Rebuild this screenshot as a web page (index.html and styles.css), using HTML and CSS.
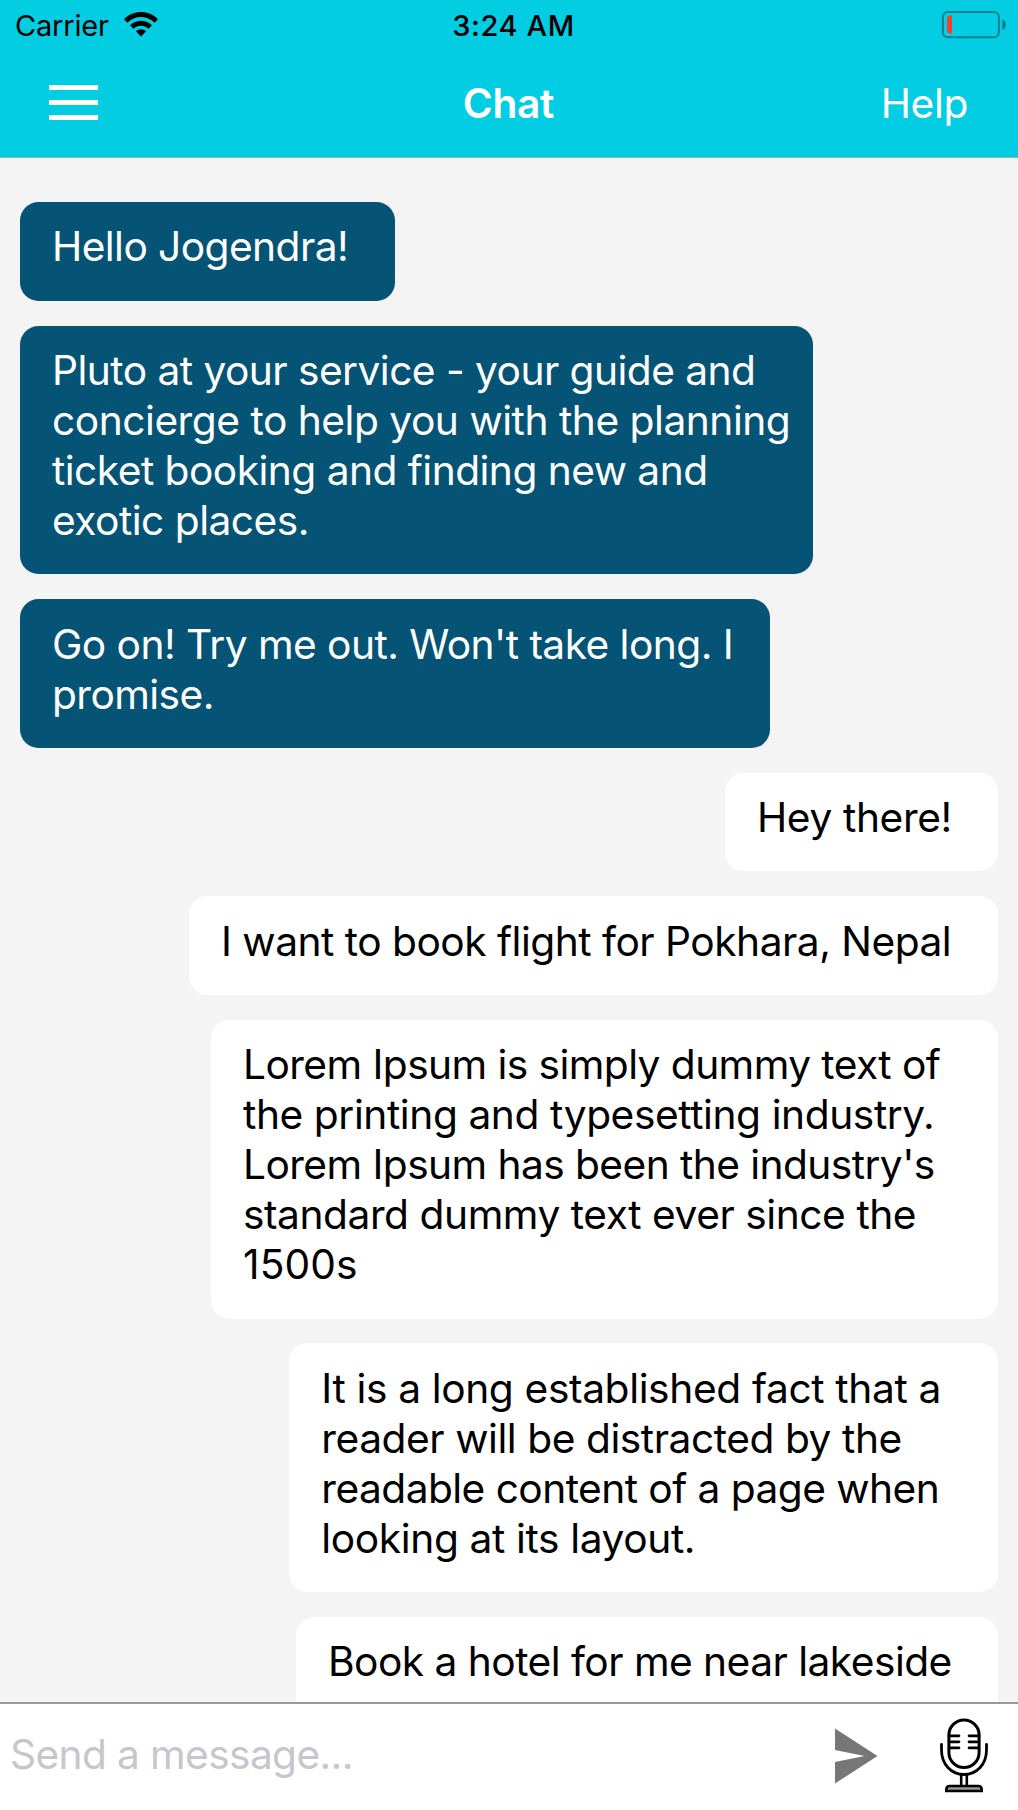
FILE: index.html
```
<!DOCTYPE html>
<html lang="en">
<head>
<meta charset="utf-8">
<title>Chat</title>
<link rel="stylesheet" href="styles.css">
</head>
<body>
<div class="app">
  <header class="header">
    <div class="status">
      <div class="status-left">
        <span class="carrier">Carrier</span>
        <svg class="wifi" width="34" height="25" viewBox="0 0 34 25">
          <path d="M0 7.2C9.5-2.4 24.5-2.4 34 7.2L30.6 10.7C23 3.2 11 3.2 3.4 10.7Z"/>
          <path d="M6 13.3C12.2 7.2 21.800 7.2 28 13.300L24.600 16.700C20.300 12.600 13.700 12.600 9.400 16.700Z"/>
          <path d="M11.800 19.200C14.800 16.500 19.200 16.500 22.200 19.200L17 24.500Z"/>
        </svg>
      </div>
      <span class="clock">3:24 AM</span>
      <svg class="battery" width="66" height="30" viewBox="0 0 66 30">
        <rect x="2.900" y="2" width="56" height="25.300" rx="5" fill="none" stroke="#047f8c" stroke-width="2"/>
        <path d="M12 5.500V23.500H10Q7 23.500 7 20.500V8.500Q7 5.500 10 5.500Z" fill="#ff3b30"/>
        <path d="M62.300 9.500Q66 11.500 66 14.700T62.300 20Z" fill="#047f8c"/>
      </svg>
    </div>
    <nav class="nav">
      <button class="menu" aria-label="Menu"><i></i><i></i><i></i></button>
      <h1 class="title">Chat</h1>
      <a class="help">Help</a>
    </nav>
  </header>

  <main class="messages">
    <div class="bubble bot w-hello"><span class="ls-57">Hello Jogendra!</span></div>
    <div class="bubble bot w-pluto">
      <span class="ls-54">Pluto at your service - your guide and</span>
      <span class="ls-48">concierge to help you with the planning</span>
      <span class="ls-53">ticket booking and finding new and</span>
      <span class="ls-51">exotic places.</span>
    </div>
    <div class="bubble bot w-go">
      <span class="ls-55">Go on! Try me out. Won't take long. I</span>
      <span class="ls-57">promise.</span>
    </div>
    <div class="bubble user w-hey"><span class="ls-38">Hey there!</span></div>
    <div class="bubble user w-flight"><span class="ls-50">I want to book flight for Pokhara, Nepal</span></div>
    <div class="bubble user w-lorem">
      <span class="ls-57">Lorem Ipsum is simply dummy text of</span>
      <span class="ls-42">the printing and typesetting industry.</span>
      <span class="ls-57">Lorem Ipsum has been the industry's</span>
      <span class="ls-45">standard dummy text ever since the</span>
      <span class="ls-0">1500s</span>
    </div>
    <div class="bubble user w-fact">
      <span class="ls-37">It is a long established fact that a</span>
      <span class="ls-45">reader will be distracted by the</span>
      <span class="ls-55">readable content of a page when</span>
      <span class="ls-38">looking at its layout.</span>
    </div>
    <div class="bubble user w-hotel"><span class="ls-53">Book a hotel for me near lakeside</span></div>
  </main>

  <footer class="composer">
    <span class="placeholder">Send a message...</span>
    <svg class="send" width="43" height="56" viewBox="0 0 43 56">
      <path d="M0 0.500L42.500 28L0 55.500V34L29.500 28L0 22Z" fill="#777"/>
    </svg>
    <svg class="mic" width="48" height="75" viewBox="0 0 48 75" fill="none" stroke="#000" stroke-width="3" stroke-linecap="round">
      <rect x="8.900" y="2" width="30.200" height="47.500" rx="15.100"/>
      <path d="M9 17.800H19M9 23.800H19M9 29.800H19M29 17.800H39M29 23.800H39M29 29.800H39" stroke-width="2.700"/>
      <path d="M1.500 26.500V32C1.500 46 11 56.500 24 56.500S46.500 46 46.500 32V26.500" stroke-width="2.800"/>
      <path d="M21.200 57V67M26.800 57V67" stroke-width="2.600"/>
      <path d="M6.300 73V71.500Q6.300 68 9.800 68H38.200Q41.700 68 41.700 71.500V73Z" fill="#999" stroke-width="2.600"/>
    </svg>
  </footer>
</div>
</body>
</html>
```
FILE: styles.css
```
* { box-sizing: border-box; }

body {
  margin: 0;
  font-family: Inter, "Liberation Sans", sans-serif;
  font-size: 40.7px;
  font-variant-ligatures: none;
  font-feature-settings: "calt" 0;
}

.app {
  display: flex;
  flex-direction: column;
  height: 1810px;
  overflow: hidden;
  background: #f4f4f4;
}

.header {
  flex: none;
  height: 158px;
  background: #02cde2;
  border-bottom: 1px solid #8fb0b4;
}

.status {
  display: grid;
  grid-template-columns: 1fr auto 1fr;
  align-items: start;
  height: 52px;
  padding: 8px 12px 0 15px;
  font-size: 29px;
  line-height: 35px;
}

.status-left { display: flex; gap: 15px; }
.carrier { letter-spacing: -0.2px; }
.wifi { margin-top: 4px; }
.clock { padding-left: 6px; font-weight: 500; letter-spacing: 0.65px; }
.battery { justify-self: end; margin-top: 2px; }

.nav {
  display: grid;
  grid-template-columns: 1fr auto 1fr;
  align-items: start;
  height: 105px;
  padding: 27px 50px 0 49px;
  color: #fff;
  line-height: 50px;
}

.menu {
  display: flex;
  flex-direction: column;
  gap: 10px;
  width: 49px;
  margin: 6px 0 0;
  padding: 0;
  border: 0;
  background: none;
}

.menu i { width: 49px; height: 5px; background: #fff; }
.title { margin: 0; font-size: inherit; font-weight: 600; letter-spacing: -0.32px; }
.help { justify-self: end; letter-spacing: -0.37px; }

.messages {
  flex: 1;
  min-height: 0;
  display: flex;
  flex-direction: column;
  align-items: flex-start;
  gap: 24.900px;
  padding: 44px 20px 0;
  overflow: hidden;
}

.bubble {
  flex: none;
  padding: 20.400px 0 28.300px 32px;
  border-radius: 18.500px;
  line-height: 50px;
  white-space: nowrap;
}

.bubble span { display: block; }
.bot { background: #055475; color: #fff; }
.user { align-self: flex-end; background: #fff; color: #000; }

.w-hello { width: 375px; }
.w-pluto { width: 793px; }
.w-go { width: 749.700px; }
.w-hey { width: 273px; }
.w-flight { width: 809px; }
.w-lorem { width: 787px; }
.w-fact { width: 708.700px; }
.w-hotel { width: 702px; }

.ls-0 { letter-spacing: 0.1px; }
.ls-37 { letter-spacing: -0.37px; }
.ls-38 { letter-spacing: -0.38px; }
.ls-42 { letter-spacing: -0.42px; }
.ls-45 { letter-spacing: -0.45px; }
.ls-48 { letter-spacing: -0.48px; }
.ls-50 { letter-spacing: -0.5px; }
.ls-51 { letter-spacing: -0.51px; }
.ls-53 { letter-spacing: -0.53px; }
.ls-54 { letter-spacing: -0.54px; }
.ls-55 { letter-spacing: -0.55px; }
.ls-57 { letter-spacing: -0.57px; }

.composer {
  flex: none;
  display: flex;
  align-items: flex-start;
  height: 108px;
  padding: 14px 30px 0 10px;
  border-top: 2px solid #999;
  background: #fff;
}

.placeholder {
  flex: 1;
  margin-top: 12px;
  color: #c7c6cd;
  line-height: 50px;
  letter-spacing: -0.63px;
}

.send { margin: 10px 62px 0 0; }
.mic { flex: none; }
```
